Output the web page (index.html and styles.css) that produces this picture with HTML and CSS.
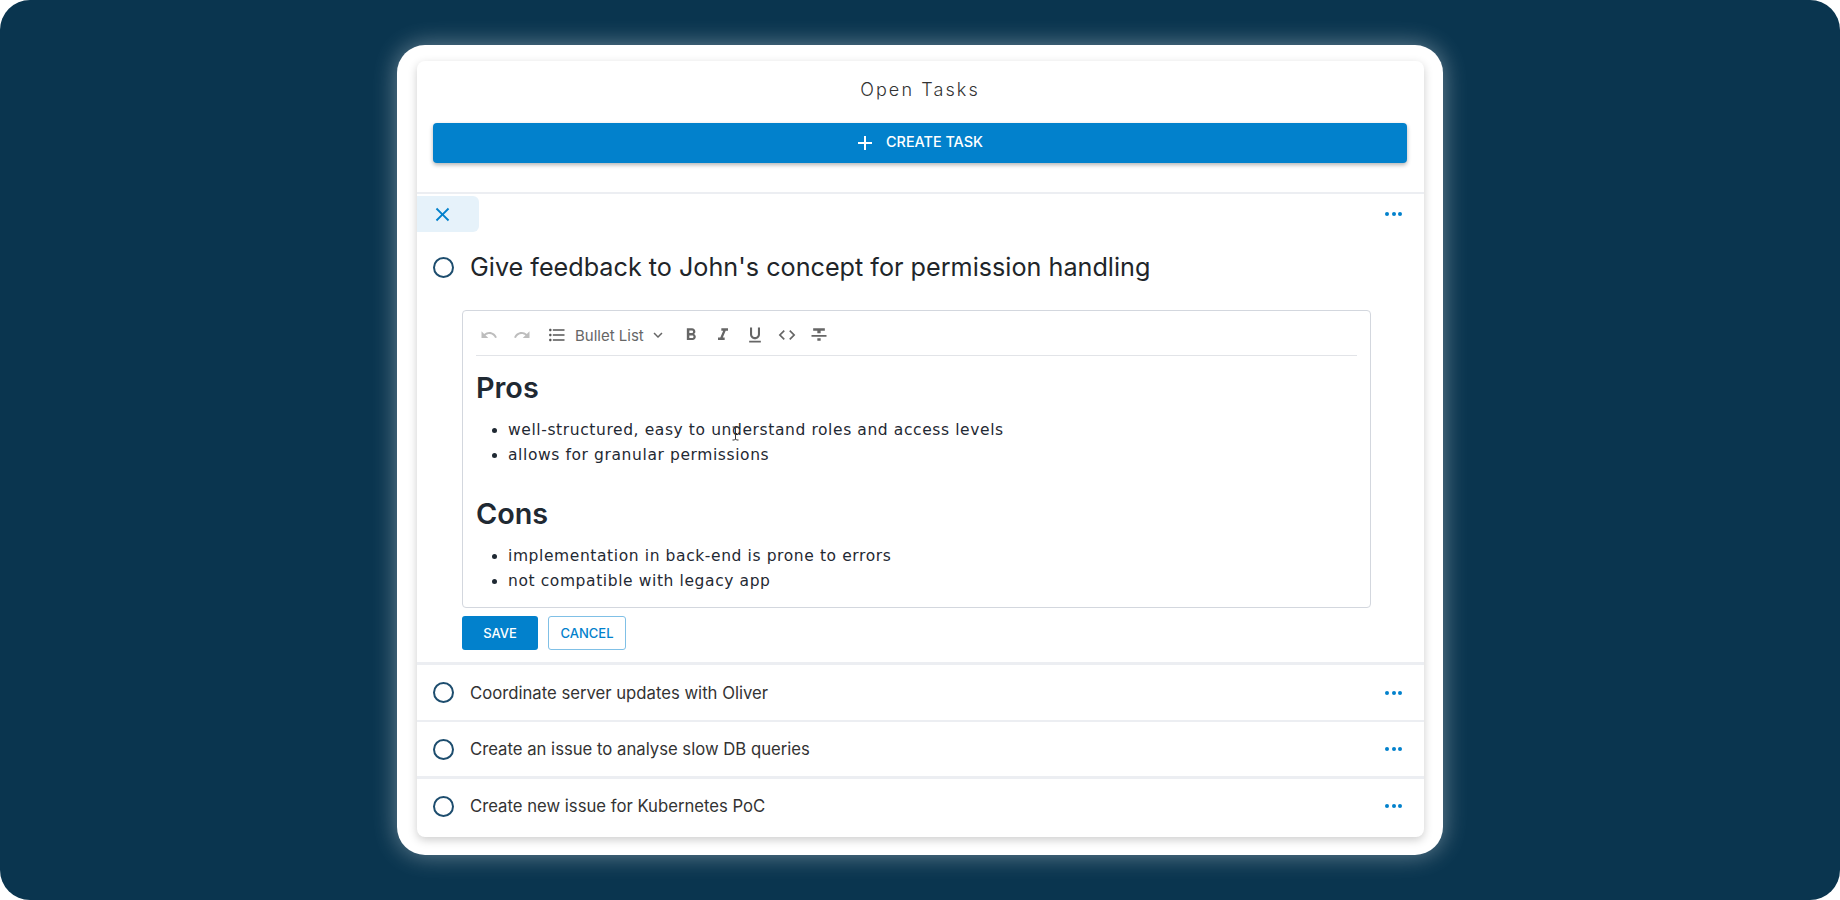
FILE: index.html
```html
<!DOCTYPE html>
<html lang="en">
<head>
    <meta charset="UTF-8">
    <title>Open Tasks</title>
    <link rel="stylesheet" href="styles.css">
</head>
<body>
    <div class="screen">
        <div class="panel">
            <div class="card">
                <div class="card-head">
                    <h1 class="card-title">Open Tasks</h1>
                    <button class="button button-create">
                        <svg class="plus" viewBox="0 0 24 24"><path d="M19 13h-6v6h-2v-6H5v-2h6V5h2v6h6z"/></svg>
                        Create Task
                    </button>
                </div>

                <div class="task task-open">
                    <div class="task-bar">
                        <button class="close-tab">
                            <svg viewBox="0 0 24 24"><path d="M19 6.41 17.59 5 12 10.59 6.41 5 5 6.41 10.59 12 5 17.59 6.41 19 12 13.41 17.59 19 19 17.59 13.41 12z"/></svg>
                        </button>
                        <span class="dots"><i></i><i></i><i></i></span>
                    </div>
                    <div class="task-heading">
                        <span class="circle"></span>
                        <h2 class="task-title">Give feedback to John's concept for permission handling</h2>
                    </div>
                    <div class="editor">
                        <div class="toolbar">
                            <svg class="tool-off" viewBox="0 0 24 24"><path d="M12.5 8c-2.65 0-5.05.99-6.9 2.6L2 7v9h9l-3.62-3.62c1.39-1.16 3.16-1.88 5.12-1.88 3.54 0 6.55 2.31 7.6 5.5l2.37-.78C21.08 11.03 17.15 8 12.5 8z"/></svg>
                            <svg class="tool-off" viewBox="0 0 24 24"><path d="M18.4 10.6C16.55 8.99 14.15 8 11.5 8c-4.65 0-8.58 3.03-9.96 7.22L3.9 16c1.05-3.19 4.05-5.5 7.6-5.5 1.95 0 3.73.72 5.12 1.88L13 16h9V7l-3.6 3.6z"/></svg>
                            <div class="style-select">
                                <svg class="list-icon" viewBox="0 0 24 24"><path d="M4 10.5c-.83 0-1.5.67-1.5 1.5s.67 1.5 1.5 1.5 1.5-.67 1.5-1.5-.67-1.5-1.5-1.5zm0-6c-.83 0-1.5.67-1.5 1.5S3.17 7.5 4 7.5 5.5 6.83 5.5 6 4.83 4.5 4 4.5zm0 12c-.83 0-1.5.68-1.5 1.5s.68 1.5 1.5 1.5 1.5-.68 1.5-1.5-.67-1.5-1.5-1.5zM7 19h14v-2H7v2zm0-6h14v-2H7v2zm0-8v2h14V5H7z"/></svg>
                                <span class="style-name">Bullet List</span>
                                <svg class="chevron" viewBox="0 0 24 24"><path d="M7.41 8.59 12 13.17l4.59-4.58L18 10l-6 6-6-6z"/></svg>
                            </div>
                            <svg class="tool" viewBox="0 0 24 24"><path d="M15.6 10.79c.97-.67 1.65-1.77 1.65-2.79 0-2.26-1.75-4-4-4H7v14h7.04c2.09 0 3.71-1.7 3.71-3.79 0-1.52-.86-2.82-2.15-3.42zM10 6.5h3c.83 0 1.5.67 1.5 1.5s-.67 1.5-1.5 1.5h-3v-3zm3.5 9H10v-3h3.5c.83 0 1.5.67 1.5 1.5s-.67 1.5-1.5 1.5z"/></svg>
                            <svg class="tool" viewBox="0 0 24 24"><path d="M10 4v3h2.21l-3.42 8H6v3h8v-3h-2.21l3.42-8H18V4z"/></svg>
                            <svg class="tool" viewBox="0 0 24 24"><path d="M12 17c3.31 0 6-2.69 6-6V3h-2.5v8c0 1.93-1.57 3.5-3.5 3.5S8.5 12.93 8.5 11V3H6v8c0 3.31 2.69 6 6 6zm-7 2v2h14v-2H5z"/></svg>
                            <svg class="tool" viewBox="0 0 24 24"><path d="M9.4 16.6 4.8 12l4.6-4.6L8 6l-6 6 6 6 1.4-1.4zm5.2 0 4.6-4.6-4.6-4.6L16 6l6 6-6 6-1.4-1.4z"/></svg>
                            <svg class="tool" viewBox="0 0 24 24"><path d="M10 19h4v-3h-4v3zM5 4v3h5v3h4V7h5V4H5zM3 14h18v-2H3v2z"/></svg>
                        </div>
                        <div class="content">
                            <h3>Pros</h3>
                            <ul>
                                <li>well-structured, easy to understand roles and access levels</li>
                                <li>allows for granular permissions</li>
                            </ul>
                            <h3>Cons</h3>
                            <ul>
                                <li>implementation in back-end is prone to errors</li>
                                <li>not compatible with legacy app</li>
                            </ul>
                            <svg class="cursor" viewBox="0 0 9 15"><path d="M1.5 1h2l1 1 1-1h2M4.500 2v11M1.500 14h2l1-1 1 1h2M3 7.500h3"/></svg>
                        </div>
                    </div>
                    <div class="editor-actions">
                        <button class="button button-save">Save</button>
                        <button class="button button-cancel">Cancel</button>
                    </div>
                </div>

                <div class="task task-row task-first">
                    <span class="circle"></span>
                    <span class="task-name">Coordinate server updates with Oliver</span>
                    <span class="dots"><i></i><i></i><i></i></span>
                </div>
                <div class="task task-row">
                    <span class="circle"></span>
                    <span class="task-name">Create an issue to analyse slow DB queries</span>
                    <span class="dots"><i></i><i></i><i></i></span>
                </div>
                <div class="task task-row task-last">
                    <span class="circle"></span>
                    <span class="task-name">Create new issue for Kubernetes PoC</span>
                    <span class="dots"><i></i><i></i><i></i></span>
                </div>
            </div>
        </div>
    </div>
</body>
</html>
```

FILE: styles.css
```css
body {
    margin: 0;
    background-color: #fff;
    font-family: Inter, "Liberation Sans", sans-serif;
    color: #212529;
}
.screen {
    height: 900px;
    border-radius: 30px;
    background-color: #0a354f;
    display: flex;
    justify-content: center;
    align-items: center;
    overflow: hidden;
}
.panel {
    width: 1046px;
    height: 810px;
    box-sizing: border-box;
    padding: 16px 19px 18px 20px;
    background-color: #fff;
    border-radius: 28px;
    box-shadow: 0 0 24px rgba(255, 255, 255, 0.4);
}
.card {
    height: 776px;
    background-color: #fff;
    border-radius: 8px;
    box-shadow: 0 3px 10px rgba(0, 0, 0, 0.2);
    overflow: hidden;
}
.card-head {
    height: 131px;
    padding: 0 17px 0 16px;
    text-align: center;
}
.card-title {
    margin: 0;
    height: 62px;
    line-height: 58px;
    font-size: 18px;
    font-weight: 300;
    letter-spacing: 2.1px;
    color: #333;
}
.button {
    font-family: inherit;
    font-size: 14.4px;
    font-weight: 500;
    text-transform: uppercase;
    border: none;
    border-radius: 4px;
    cursor: pointer;
}
.button-create {
    width: 100%;
    height: 40px;
    padding: 0 4px 4px 0;
    display: flex;
    justify-content: center;
    align-items: center;
    gap: 9px;
    background-color: #0281cc;
    color: #fff;
    box-shadow: 0 2px 4px rgba(0, 0, 0, 0.3);
}
.plus {
    width: 24px;
    height: 24px;
    fill: #fff;
    margin-top: 4px;
}
.task {
    border-top: 2px solid #eceef2;
}
.task-open {
    height: 470px;
    box-sizing: border-box;
}
.task-bar {
    height: 37px;
    padding: 3px 16px 0 0;
    box-sizing: border-box;
    display: flex;
    justify-content: space-between;
    align-items: center;
}
.close-tab {
    width: 62px;
    height: 36px;
    padding: 0 0 0 14px;
    display: flex;
    align-items: center;
    background-color: #e6f2fa;
    border: none;
    border-radius: 0 6px 6px 0;
}
.close-tab svg {
    width: 23px;
    height: 23px;
    fill: #0281cc;
}
.dots {
    width: 17px;
    margin-left: auto;
    margin-right: 6px;
    display: flex;
    justify-content: space-between;
}
.dots i {
    width: 4px;
    height: 4px;
    border-radius: 50%;
    background-color: #0281cc;
}
.task-bar .dots {
    margin-top: -1px;
}
.task-heading {
    height: 50px;
    margin-top: 11px;
    padding-left: 16px;
    display: flex;
    align-items: center;
}
.circle {
    width: 17px;
    height: 17px;
    flex: none;
    border: 2px solid #1d4d6e;
    border-radius: 50%;
}
.task-title {
    margin: 0 0 0 16px;
    font-size: 25.2px;
    font-weight: 400;
}
.editor {
    width: 909px;
    height: 298px;
    box-sizing: border-box;
    margin: 18px 0 0 45px;
    padding: 0 13px;
    border: 1px solid #d3d7de;
    border-radius: 4px;
}
.toolbar {
    height: 45px;
    box-sizing: border-box;
    padding-top: 4px;
    display: flex;
    align-items: center;
    border-bottom: 1px solid #e2e4e8;
}
.tool-off {
    width: 18px;
    height: 18px;
    flex: none;
    margin-left: 4px;
    fill: #bdbdbd;
}
.tool-off + .tool-off {
    margin-left: 15px;
}
.tool {
    width: 20px;
    height: 20px;
    flex: none;
    margin: 0 6px;
    fill: #666;
}
.style-select {
    display: flex;
    align-items: center;
    margin: 0 8px 0 16px;
    color: #666;
}
.list-icon {
    width: 20px;
    height: 20px;
    fill: #555;
}
.style-name {
    margin: 0 5px 0 8px;
    font-size: 15px;
}
.chevron {
    width: 18px;
    height: 18px;
    fill: #666;
}
.content {
    position: relative;
    font-family: "DejaVu Sans", sans-serif;
    font-size: 15.5px;
    letter-spacing: 0.6px;
    color: #1f2933;
}
.content h3 {
    margin: 0;
    height: 59px;
    line-height: 63px;
    font-family: Inter, sans-serif;
    font-size: 28.8px;
    font-weight: 600;
    letter-spacing: 0;
}
.content ul {
    margin: 0;
    padding: 3px 0 0 32px;
    height: 64px;
}
.content li {
    height: 25px;
    line-height: 25px;
}
.cursor {
    position: absolute;
    left: 255px;
    top: 70px;
    width: 9px;
    height: 15px;
    fill: none;
    stroke: #333;
    stroke-width: 1;
}
.editor-actions {
    display: flex;
    gap: 10px;
    margin: 8px 0 0 45px;
}
.button-save,
.button-cancel {
    height: 34px;
    font-size: 13px;
    border-radius: 3px;
}
.button-save {
    width: 76px;
    background-color: #0281cc;
    color: #fff;
}
.button-cancel {
    width: 78px;
    background-color: #fff;
    color: #0281cc;
    border: 1px solid #80c0e6;
}
.task-row {
    height: 56px;
    box-sizing: border-box;
    padding: 0 16px;
    display: flex;
    align-items: center;
}
.task-first {
    height: 58px;
    border-top-width: 3px;
}
.task-last {
    height: 60px;
    padding-bottom: 3px;
    border-top-width: 3px;
}
.task-name {
    margin-left: 16px;
    font-size: 16.7px;
    color: #333;
}
```
